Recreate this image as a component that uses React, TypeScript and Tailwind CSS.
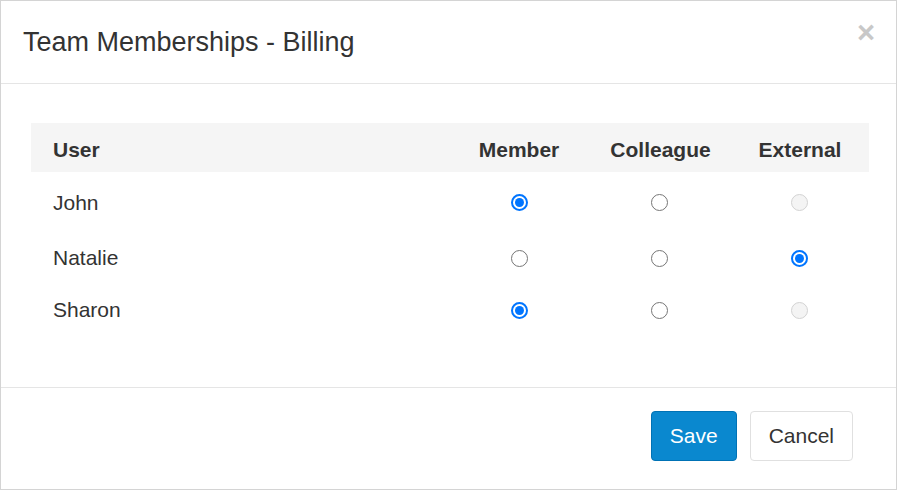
import React from 'react'

type Choice = 'member' | 'colleague' | 'external'

interface Row {
  name: string
  value: Choice
  externalDisabled: boolean
  height: string
}

const ROWS: Row[] = [
  { name: 'John', value: 'member', externalDisabled: true, height: 'h-[61px]' },
  { name: 'Natalie', value: 'external', externalDisabled: false, height: 'h-[50px]' },
  { name: 'Sharon', value: 'member', externalDisabled: true, height: 'h-[54px]' },
]

function Radio({ checked, disabled }: { checked?: boolean; disabled?: boolean }) {
  if (checked) {
    return (
      <span className="flex h-[17px] w-[17px] items-center justify-center rounded-full border-2 border-[#0075ff] bg-white">
        <span className="h-[9px] w-[9px] rounded-full bg-[#0075ff]" />
      </span>
    )
  }
  if (disabled) {
    return <span className="block h-[17px] w-[17px] rounded-full border border-[#d3d3d3] bg-[#f4f4f4]" />
  }
  return <span className="block h-[17px] w-[17px] rounded-full border-[1.5px] border-[#767676] bg-white" />
}

export default function App() {
  return (
    <div
      className="flex h-[490px] w-[897px] flex-col border border-[#d4d4d4] bg-white text-[#333]"
      style={{ fontFamily: '"Liberation Sans", Arial, sans-serif' }}
    >
      {/* Header */}
      <div className="flex h-[83px] shrink-0 items-center justify-between border-b border-[#e5e5e5] pl-[22px] pr-[21px]">
        <h4 className="text-[27px] leading-[38px]">Team Memberships - Billing</h4>
        <button className="-mt-[19px] text-[31px] font-bold leading-none text-[#c8c8c8]">×</button>
      </div>

      {/* Body */}
      <div className="flex-1 pl-[30px] pr-[26px] pt-[39px]">
        <div className="w-[838px] text-[21px]">
          <div className="flex h-[49px] items-center bg-[#f5f5f5] pt-[4px] font-bold">
            <div className="flex-1 pl-[22px]">User</div>
            <div className="w-[140px] text-center">Member</div>
            <div className="w-[140px] pl-[3px] text-center">Colleague</div>
            <div className="w-[140px] pl-[2px] text-center">External</div>
          </div>
          {ROWS.map((row) => (
            <div key={row.name} className={`flex items-center ${row.height}`}>
              <div className="flex-1 pl-[22px]">{row.name}</div>
              <div className="flex w-[140px] justify-center">
                <Radio checked={row.value === 'member'} />
              </div>
              <div className="flex w-[140px] justify-center">
                <Radio checked={row.value === 'colleague'} />
              </div>
              <div className="flex w-[140px] justify-center">
                <Radio checked={row.value === 'external'} disabled={row.externalDisabled} />
              </div>
            </div>
          ))}
        </div>
      </div>

      {/* Footer */}
      <div className="flex h-[102px] shrink-0 items-start justify-end gap-[13px] border-t border-[#e5e5e5] pr-[43px] pt-[23px]">
        <button className="h-[50px] rounded-[4px] border border-[#0072b5] bg-[#0a88cf] px-[18px] text-[21px] text-white">
          Save
        </button>
        <button className="h-[50px] rounded-[4px] border border-[#e0e0e0] bg-white px-[18px] text-[21px] text-[#333]">
          Cancel
        </button>
      </div>
    </div>
  )
}
